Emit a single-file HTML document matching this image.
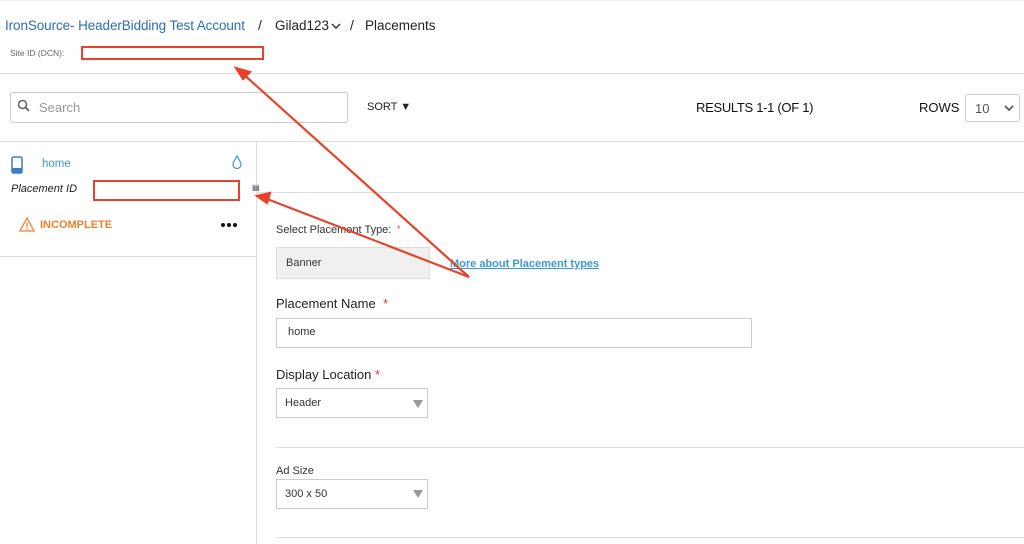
<!DOCTYPE html>
<html><head><meta charset="utf-8"><style>
*{box-sizing:border-box;margin:0;padding:0}
body{width:1024px;height:544px;overflow:hidden;background:#fff;font-family:"Liberation Sans",sans-serif;color:#222;position:relative}
.a{position:absolute;white-space:nowrap}
.hl{position:absolute;height:1px;background:#ddd}
.box{position:absolute;border:1px solid #ccc;background:#fff}
.red{position:absolute;border:2px solid #e8432a}
.tri{position:absolute;width:0;height:0;border-left:5px solid transparent;border-right:5px solid transparent;border-top:8px solid #999}
</style></head><body>
<div class="hl" style="left:0;top:0;width:1024px;background:#eee"></div>
<div class="a" style="left:5px;top:18px;font-size:13.5px;color:#2d6fb0;letter-spacing:-0.1px">IronSource- HeaderBidding Test Account</div>
<div class="a" style="left:258px;top:17px;font-size:14px;color:#222">/</div>
<div class="a" style="left:275px;top:18px;font-size:13.5px;color:#222">Gilad123</div>
<svg class="a" style="left:331px;top:22px" width="10" height="8"><path d="M1 2 L5 6 L9 2" fill="none" stroke="#333" stroke-width="1.5"/></svg>
<div class="a" style="left:350px;top:17px;font-size:14px;color:#222">/</div>
<div class="a" style="left:365px;top:18px;font-size:13.5px;color:#222">Placements</div>
<div class="a" style="left:10px;top:48px;font-size:8.5px;color:#666">Site ID (DCN):</div>
<div class="red" style="left:81px;top:46px;width:183px;height:14px"></div>
<div class="hl" style="left:0;top:73px;width:1024px"></div>
<div class="box" style="left:10px;top:92px;width:338px;height:31px;border-radius:3px"></div>
<svg class="a" style="left:17px;top:99px" width="14" height="14"><circle cx="5.5" cy="5.5" r="4" fill="none" stroke="#666" stroke-width="1.6"/><line x1="8.5" y1="8.5" x2="12" y2="12" stroke="#666" stroke-width="1.8"/></svg>
<div class="a" style="left:39px;top:100px;font-size:13px;color:#999">Search</div>
<div class="a" style="left:367px;top:101px;font-size:11px;color:#222">SORT &#9660;</div>
<div class="a" style="left:696px;top:100px;font-size:13px;color:#111;letter-spacing:-0.3px">RESULTS 1-1 (OF 1)</div>
<div class="a" style="left:919px;top:100px;font-size:13px;color:#111">ROWS</div>
<div class="box" style="left:965px;top:94px;width:55px;height:28px;border-radius:3px"></div>
<div class="a" style="left:975px;top:101px;font-size:13px;color:#555">10</div>
<svg class="a" style="left:1004px;top:104px" width="10" height="8"><path d="M1 2 L5 6 L9 2" fill="none" stroke="#555" stroke-width="1.6"/></svg>
<div class="hl" style="left:0;top:141px;width:1024px"></div>
<div style="position:absolute;left:256px;top:141px;width:1px;height:403px;background:#ddd"></div>
<div class="hl" style="left:257px;top:192px;width:767px"></div>
<svg class="a" style="left:11px;top:156px" width="12" height="18"><rect x="1" y="1" width="10" height="16" rx="1.5" fill="none" stroke="#3a7fc1" stroke-width="1.5"/><rect x="1" y="12" width="10" height="5" fill="#3a7fc1"/></svg>
<div class="a" style="left:42px;top:158px;font-size:11.5px;color:#3a9bd0">home</div>
<svg class="a" style="left:232px;top:155px" width="10" height="14"><path d="M5 1 C7 5 9 7 9 9.5 A4 4 0 0 1 1 9.5 C1 7 3 5 5 1Z" fill="none" stroke="#3a9bd0" stroke-width="1.2"/></svg>
<div class="a" style="left:11px;top:183px;font-size:11px;font-style:italic;color:#222">Placement ID</div>
<div class="red" style="left:93px;top:180px;width:147px;height:21px"></div>
<div class="a" style="left:252px;top:183px;font-size:8px;color:#333">&#9636;</div>
<svg class="a" style="left:19px;top:217px" width="16" height="15"><path d="M8 1 L15 14 L1 14Z" fill="none" stroke="#f08030" stroke-width="1.3"/><line x1="8" y1="5.5" x2="8" y2="10" stroke="#f08030" stroke-width="1.3"/><circle cx="8" cy="12" r=".8" fill="#f08030"/></svg>
<div class="a" style="left:40px;top:219px;font-size:11px;font-weight:bold;color:#f08030">INCOMPLETE</div>
<svg class="a" style="left:220px;top:222px" width="18" height="6"><circle cx="3" cy="3" r="2" fill="#111"/><circle cx="9" cy="3" r="2" fill="#111"/><circle cx="15" cy="3" r="2" fill="#111"/></svg>
<div class="hl" style="left:0;top:256px;width:256px"></div>
<div class="a" style="left:276px;top:224px;font-size:11px;color:#333">Select Placement Type: <span style="color:#e33;font-size:9px;vertical-align:top">&nbsp;*</span></div>
<div style="position:absolute;left:276px;top:247px;width:154px;height:32px;background:#f0f0f0;border:1px solid #ddd"></div>
<div class="a" style="left:286px;top:257px;font-size:11px;color:#333">Banner</div>
<div class="a" style="left:450px;top:258px;font-size:11px;font-weight:bold;color:#3a9bd0;text-decoration:underline">More about Placement types</div>
<div class="a" style="left:276px;top:296px;font-size:13px;color:#222">Placement Name <span style="color:#e33">&nbsp;*</span></div>
<div class="box" style="left:276px;top:318px;width:476px;height:30px"></div>
<div class="a" style="left:288px;top:326px;font-size:11px;color:#333">home</div>
<div class="a" style="left:276px;top:367px;font-size:13px;color:#222">Display Location <span style="color:#e33">*</span></div>
<div class="box" style="left:276px;top:388px;width:152px;height:30px"></div>
<div class="a" style="left:285px;top:397px;font-size:11px;color:#333">Header</div>
<div class="tri" style="left:413px;top:400px"></div>
<div class="hl" style="left:276px;top:447px;width:748px"></div>
<div class="a" style="left:276px;top:465px;font-size:11px;color:#333">Ad Size</div>
<div class="box" style="left:276px;top:479px;width:152px;height:30px"></div>
<div class="a" style="left:285px;top:488px;font-size:11px;color:#333">300 x 50</div>
<div class="tri" style="left:413px;top:490px"></div>
<div class="hl" style="left:276px;top:537px;width:748px"></div>
<svg class="a" style="left:0;top:0" width="1024" height="544">
<g stroke="#e8432a" stroke-width="2.2" fill="#e8432a">
<line x1="469" y1="277" x2="241" y2="72"/>
<line x1="469" y1="277" x2="262" y2="197"/>
<path d="M236 68 L250 72 L243 79Z"/>
<path d="M257 196 L270 193 L267 203Z"/>
</g></svg>
</body></html>
